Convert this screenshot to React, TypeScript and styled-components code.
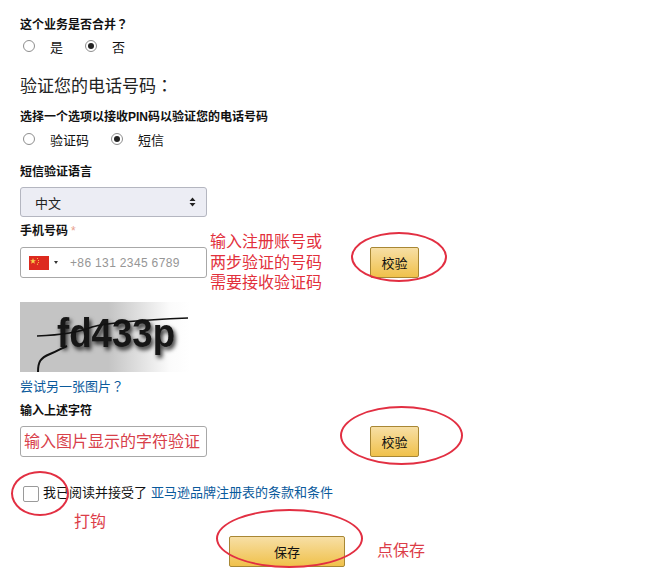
import * as React from "react"
import styled, { createGlobalStyle } from "styled-components"

const Global = createGlobalStyle`
  html, body {
    margin: 0;
    padding: 0;
    background: #fff;
  }
  body {
    font-family: "Liberation Sans", "Noto Sans CJK SC", sans-serif;
    color: #111;
  }
`

const Page = styled.div`
  position: relative;
  width: 646px;
  height: 576px;
  overflow: hidden;
  padding: 17px 0 0 20px;
  box-sizing: border-box;
`

const Label = styled.div<{ $top?: number }>`
  font-size: 12px;
  line-height: 14px;
  height: 14px;
  font-weight: bold;
  margin-top: ${(p) => p.$top || 0}px;
`

const Punct = styled.span`
  font-family: "Noto Sans CJK TC", sans-serif;
`

const Star = styled.span`
  color: #e8a08c;
  font-weight: normal;
  margin-left: 3px;
`

const RadioRow = styled.div<{ $top?: number }>`
  display: flex;
  align-items: center;
  height: 18px;
  margin-top: ${(p) => p.$top || 0}px;
  padding-left: 3px;
  font-size: 13px;
`

const Radio = styled.span<{ $on?: boolean }>`
  flex: none;
  width: 12px;
  height: 12px;
  box-sizing: border-box;
  border-radius: 50%;
  border: 1px solid #8e8e8e;
  background: #fff;
  display: flex;
  align-items: center;
  justify-content: center;
  margin-top: -2px;

  &::after {
    content: "";
    display: ${(p) => (p.$on ? "block" : "none")};
    width: 6px;
    height: 6px;
    border-radius: 50%;
    background: #222;
  }
`

const RadioText = styled.span<{ $width: number }>`
  width: ${(p) => p.$width}px;
  margin: -1px 0 0 15px;
`

const Heading = styled.div`
  font-size: 17px;
  line-height: 22px;
  height: 22px;
  font-weight: normal;
  margin-top: 18px;
  color: #222;
`

const Select = styled.div`
  width: 187px;
  height: 30px;
  margin-top: 8px;
  box-sizing: border-box;
  border: 1px solid #b4b6c0;
  border-radius: 3px;
  background: #ecedf4;
  display: flex;
  align-items: center;
  justify-content: space-between;
  padding: 0 10px 0 14px;
  font-size: 13px;
  color: #222;
`

const Updown = styled.svg`
  width: 7px;
  height: 10px;
  fill: #222;
`

const PhoneRow = styled.div`
  display: flex;
  margin-top: 7px;
`

const FieldColumn = styled.div`
  flex: none;
  width: 187px;
`

const InputBox = styled.div<{ $top: number }>`
  width: 187px;
  height: 31px;
  margin-top: ${(p) => p.$top}px;
  box-sizing: border-box;
  border: 1px solid #a8a8a8;
  border-radius: 3px;
  background: #fff;
  display: flex;
  align-items: center;
`

const Flag = styled.svg`
  width: 20px;
  height: 14px;
  margin-left: 8px;
`

const Caret = styled.span`
  width: 0;
  height: 0;
  margin-left: 5px;
  border-left: 2.5px solid transparent;
  border-right: 2.5px solid transparent;
  border-top: 3px solid #333;
`

const Placeholder = styled.span`
  margin-left: 12px;
  font-size: 12px;
  letter-spacing: 0.35px;
  color: #969696;
`

const Note = styled.div`
  flex: none;
  margin: 8px 0 0 3px;
  width: 120px;
  font-size: 16px;
  line-height: 20.5px;
  color: #e2303c;
  white-space: nowrap;
`

const NoteInBox = styled.span`
  margin: -3px 0 0 3px;
  font-size: 16px;
  color: #d8404a;
  white-space: nowrap;
`

const Button = styled.button<{ $wide?: boolean }>`
  flex: none;
  width: ${(p) => (p.$wide ? 116 : 49)}px;
  height: 31px;
  box-sizing: border-box;
  padding: 0;
  border: 1px solid #a88734;
  border-radius: 2px;
  background: linear-gradient(to bottom, #f7dfa5, #f0c14b);
  font-family: inherit;
  font-size: 13px;
  color: #111;
`

const PhoneButton = styled(Button)`
  margin: 23px 0 0 40px;
`

const Captcha = styled.svg`
  display: block;
  width: 170px;
  height: 70px;
  margin-top: 8.5px;
`

const RetryLink = styled.a`
  display: block;
  height: 16px;
  margin-top: 6px;
  font-size: 13px;
  line-height: 16px;
  color: #0a5a9c;
  text-decoration: none;
`

const CodeRow = styled.div`
  display: flex;
`

const CodeButton = styled(Button)`
  margin: 32px 0 0 163px;
`

const TermsRow = styled.div`
  display: flex;
  align-items: center;
  margin: 29px 0 0 3px;
  height: 16px;
  font-size: 13px;
  white-space: nowrap;
`

const TermsText = styled.span`
  margin-bottom: 6px;
`

const TermsLink = styled.a`
  margin-left: 4px;
  color: #0a5a9c;
  text-decoration: none;
`

const Checkbox = styled.span`
  width: 16px;
  height: 16px;
  box-sizing: border-box;
  border: 1px solid #9a9a9a;
  border-radius: 2px;
  background: #fff;
  margin-right: 4px;
`

const SaveRow = styled.div`
  display: flex;
  margin: 34px 0 0 209px;
`

const Tip = styled.div<{ $x: number; $y: number }>`
  position: absolute;
  left: ${(p) => p.$x}px;
  top: ${(p) => p.$y}px;
  font-size: 16px;
  line-height: 20px;
  color: #dc3d48;
  white-space: nowrap;
`

const Ring = styled.div<{ $x: number; $y: number; $w: number; $h: number }>`
  position: absolute;
  left: ${(p) => p.$x}px;
  top: ${(p) => p.$y}px;
  width: ${(p) => p.$w}px;
  height: ${(p) => p.$h}px;
  box-sizing: border-box;
  border: 2.5px solid #e22f42;
  border-radius: 50%;
  pointer-events: none;
`

const App: React.FunctionComponent = () => {
  return (
    <Page>
      <Global />
      <Label>这个业务是否合并<Punct>？</Punct></Label>
      <RadioRow $top={7}>
        <Radio />
        <RadioText $width={35}>是</RadioText>
        <Radio $on />
        <RadioText $width={20}>否</RadioText>
      </RadioRow>

      <Heading>验证您的电话号码<Punct>：</Punct></Heading>

      <Label $top={14}>选择一个选项以接收PIN码以验证您的电话号码</Label>
      <RadioRow $top={7}>
        <Radio />
        <RadioText $width={61}>验证码</RadioText>
        <Radio $on />
        <RadioText $width={30}>短信</RadioText>
      </RadioRow>

      <Label $top={16}>短信验证语言</Label>
      <Select>
        中文
        <Updown viewBox="0 0 7 10">
          <path d="M3.5 0.5 L6.5 4 H0.5 Z M0.5 6 H6.5 L3.5 9.5 Z" />
        </Updown>
      </Select>

      <PhoneRow>
        <FieldColumn>
          <Label>
            手机号码<Star>*</Star>
          </Label>
          <InputBox $top={9}>
            <Flag viewBox="0 0 20 14">
              <rect width="20" height="14" fill="#dd2a1f" />
              <path d="M4 2 L4.8 4.2 L7 4.2 L5.2 5.6 L5.9 7.8 L4 6.5 L2.1 7.8 L2.8 5.6 L1 4.2 L3.2 4.2 Z" fill="#f7d24a" />
              <circle cx="8.5" cy="2.5" r="0.6" fill="#f7d24a" />
              <circle cx="9.5" cy="4.5" r="0.6" fill="#f7d24a" />
              <circle cx="9.5" cy="6.5" r="0.6" fill="#f7d24a" />
              <circle cx="8.5" cy="8.2" r="0.6" fill="#f7d24a" />
            </Flag>
            <Caret />
            <Placeholder>+86 131 2345 6789</Placeholder>
          </InputBox>
        </FieldColumn>
        <Note>
          输入注册账号或
          <br />
          两步验证的号码
          <br />
          需要接收验证码
        </Note>
        <PhoneButton>校验</PhoneButton>
      </PhoneRow>

      <Captcha viewBox="0 0 170 70">
        <defs>
          <linearGradient id="captchaBg" x1="0" x2="1" y1="0" y2="0">
            <stop offset="0.52" stopColor="#c4c4c4" />
            <stop offset="0.88" stopColor="#fbfbfb" />
            <stop offset="1" stopColor="#ffffff" />
          </linearGradient>
          <filter id="captchaShadow" x="-10%" y="-30%" width="120%" height="160%">
            <feDropShadow dx="2" dy="3" stdDeviation="2" floodColor="#000" floodOpacity="0.8" />
          </filter>
        </defs>
        <rect width="170" height="70" fill="url(#captchaBg)" />
        <text x="37" y="45" fontFamily="Liberation Sans" fontSize="41" fontWeight="bold" fill="#161616" filter="url(#captchaShadow)" textLength="118" lengthAdjust="spacingAndGlyphs">
          fd433p
        </text>
        <path d="M17 34 C40 33 60 30 72 25 C90 20 120 18 168 16" fill="none" stroke="#111" strokeWidth="1.6" />
        <path d="M18 70 C18 60 20 56 30 52 C38 49 42 46 47 44" fill="none" stroke="#111" strokeWidth="2" />
      </Captcha>

      <RetryLink>尝试另一张图片<Punct>？</Punct></RetryLink>

      <CodeRow>
        <FieldColumn>
          <Label $top={10}>输入上述字符</Label>
          <InputBox $top={8}>
            <NoteInBox>输入图片显示的字符验证</NoteInBox>
          </InputBox>
        </FieldColumn>
        <CodeButton>校验</CodeButton>
      </CodeRow>

      <TermsRow>
        <Checkbox />
        <TermsText>
          我已阅读并接受了
          <TermsLink>亚马逊品牌注册表的条款和条件</TermsLink>
        </TermsText>
      </TermsRow>

      <SaveRow>
        <Button $wide>保存</Button>
      </SaveRow>

      <Tip $x={74} $y={512}>打钩</Tip>
      <Tip $x={377} $y={541}>点保存</Tip>

      <Ring $x={351} $y={232} $w={96} $h={50} />
      <Ring $x={340} $y={406} $w={123} $h={59} />
      <Ring $x={11} $y={471} $w={58} $h={45} />
      <Ring $x={216} $y={509} $w={147} $h={59} />
    </Page>
  )
}

export default App
